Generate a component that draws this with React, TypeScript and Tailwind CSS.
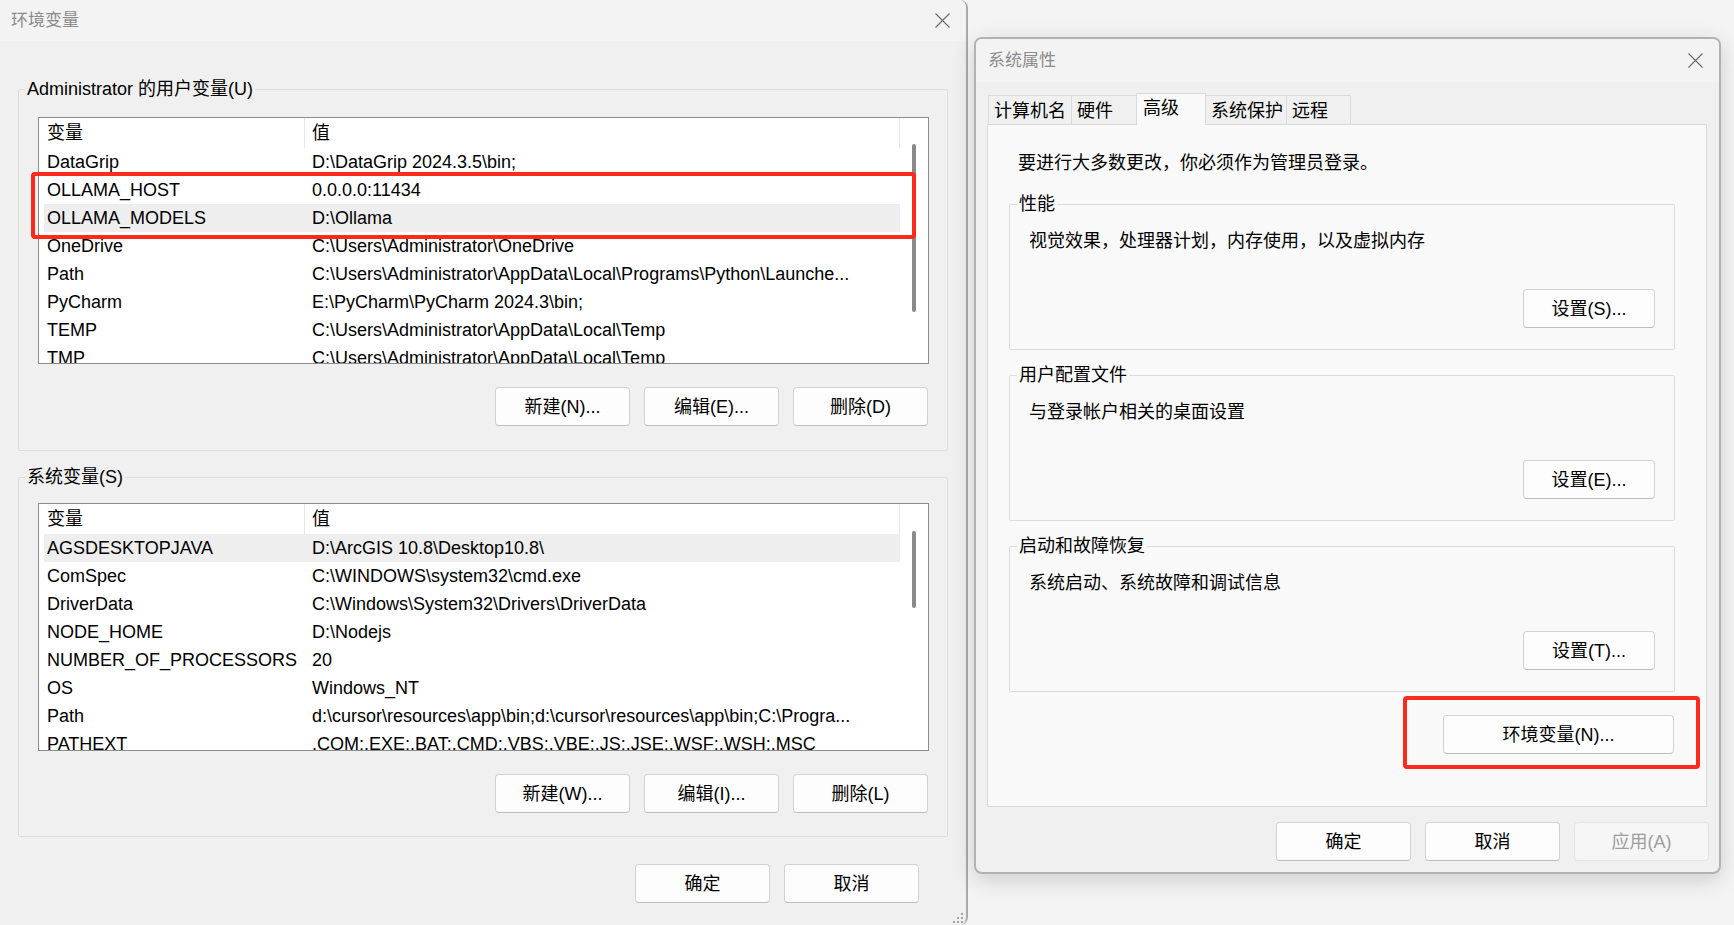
import React from "react";

type Row = [string, string];

const userVars: Row[] = [
  ["DataGrip", "D:\\DataGrip 2024.3.5\\bin;"],
  ["OLLAMA_HOST", "0.0.0.0:11434"],
  ["OLLAMA_MODELS", "D:\\Ollama"],
  ["OneDrive", "C:\\Users\\Administrator\\OneDrive"],
  ["Path", "C:\\Users\\Administrator\\AppData\\Local\\Programs\\Python\\Launche..."],
  ["PyCharm", "E:\\PyCharm\\PyCharm 2024.3\\bin;"],
  ["TEMP", "C:\\Users\\Administrator\\AppData\\Local\\Temp"],
  ["TMP", "C:\\Users\\Administrator\\AppData\\Local\\Temp"],
];

const sysVars: Row[] = [
  ["AGSDESKTOPJAVA", "D:\\ArcGIS 10.8\\Desktop10.8\\"],
  ["ComSpec", "C:\\WINDOWS\\system32\\cmd.exe"],
  ["DriverData", "C:\\Windows\\System32\\Drivers\\DriverData"],
  ["NODE_HOME", "D:\\Nodejs"],
  ["NUMBER_OF_PROCESSORS", "20"],
  ["OS", "Windows_NT"],
  ["Path", "d:\\cursor\\resources\\app\\bin;d:\\cursor\\resources\\app\\bin;C:\\Progra..."],
  ["PATHEXT", ".COM;.EXE;.BAT;.CMD;.VBS;.VBE;.JS;.JSE;.WSF;.WSH;.MSC"],
];

function CloseIcon() {
  return (
    <svg width="15" height="15" viewBox="0 0 15 15" fill="none">
      <path d="M0.5 0.5L14.5 14.5M14.5 0.5L0.5 14.5" stroke="#6a6a6a" strokeWidth="1.1" />
    </svg>
  );
}

function Btn({ children, className = "", disabled = false }: { children: React.ReactNode; className?: string; disabled?: boolean }) {
  const look = disabled
    ? "border-[#e3e3e3] bg-[#f6f6f6] text-[#9d9d9d]"
    : "border-[#d2d2d2] border-b-[#bcbcbc] bg-[#fdfdfd] text-black";
  return (
    <button className={`h-[39px] shrink-0 rounded-[4px] border text-[18px] leading-[24px] flex items-center justify-center ${look} ${className}`}>
      {children}
    </button>
  );
}

function GroupBox({
  label,
  legendClass,
  className = "",
  bodyClass,
  children,
}: {
  label: string;
  legendClass: string;
  className?: string;
  bodyClass: string;
  children: React.ReactNode;
}) {
  return (
    <fieldset className={`border border-[#dcdcdc] rounded-[2px] ${className}`}>
      <legend className={`px-[2px] text-[18px] leading-[24px] text-black ${legendClass}`}>{label}</legend>
      <div className={bodyClass}>{children}</div>
    </fieldset>
  );
}

function ListBox({
  rows,
  selected,
  height,
  thumbTop,
  thumbHeight,
}: {
  rows: Row[];
  selected: number;
  height: string;
  thumbTop: string;
  thumbHeight: string;
}) {
  return (
    <div className={`flex border border-[#8c8c8c] bg-white overflow-hidden ${height}`}>
      <div className="w-[861px] shrink-0">
        {/* column header */}
        <div className="flex h-[30px] border-r border-[#e8e8e8] text-[18px] leading-[30px]">
          <div className="w-[266px] shrink-0 pl-[8px] border-r border-[#e5e5e5]">变量</div>
          <div className="pl-[7px]">值</div>
        </div>
        <div className="pl-[5px]">
          {rows.map(([name, value], i) => (
            <div
              key={name + i}
              className={`flex h-[28px] text-[18px] leading-[28px] whitespace-nowrap ${i === selected ? "bg-[#eeeeee]" : ""}`}
            >
              <div className="w-[261px] shrink-0 pl-[3px] overflow-hidden">{name}</div>
              <div className="flex-1 min-w-0 pl-[7px] pr-[6px] overflow-hidden text-ellipsis">{value}</div>
            </div>
          ))}
        </div>
      </div>
      {/* scrollbar */}
      <div className={`flex-1 flex justify-center ${thumbTop}`}>
        <div className={`w-[4px] rounded-full bg-[#8a8a8a] ${thumbHeight}`} />
      </div>
    </div>
  );
}

function EnvDialog() {
  return (
    <div className="relative flex flex-col w-[968px] h-[925px] shrink-0 bg-[#f0f0f0] border-r-2 border-[#a9a9a9] rounded-r-[8px]">
      <div className="h-[41px] shrink-0 bg-[#f3f3f3] rounded-tr-[8px] flex items-center justify-between pl-[11px] pr-[16px]">
        <span className="text-[17px] leading-[24px] text-[#8b8b8b]">环境变量</span>
        <CloseIcon />
      </div>

      <div className="px-[18px] pt-[36px]">
        <GroupBox
          label="Administrator 的用户变量(U)"
          legendClass="ml-[6px]"
          bodyClass="pl-[19px] pr-[18px] pt-[16px] pb-[24px]"
        >
          <div className="relative">
            <ListBox rows={userVars} selected={2} height="h-[247px]" thumbTop="pt-[26px]" thumbHeight="h-[168px]" />
            {/* annotation */}
            <div className="absolute left-[-7px] top-[55px] w-[885px] h-[67px] border-[4px] border-[#fa2a1c] rounded-[4px]" />
          </div>
          <div className="mt-[23px] flex justify-end gap-[14px] pr-[1px]">
            <Btn className="w-[135px]">新建(N)...</Btn>
            <Btn className="w-[135px]">编辑(E)...</Btn>
            <Btn className="w-[135px]">删除(D)</Btn>
          </div>
        </GroupBox>

        <GroupBox
          label="系统变量(S)"
          legendClass="ml-[6px]"
          className="mt-[14px]"
          bodyClass="pl-[19px] pr-[18px] pt-[14px] pb-[23px]"
        >
          <ListBox rows={sysVars} selected={0} height="h-[248px]" thumbTop="pt-[27px]" thumbHeight="h-[77px]" />
          <div className="mt-[23px] flex justify-end gap-[14px] pr-[1px]">
            <Btn className="w-[135px]">新建(W)...</Btn>
            <Btn className="w-[135px]">编辑(I)...</Btn>
            <Btn className="w-[135px]">删除(L)</Btn>
          </div>
        </GroupBox>

        <div className="mt-[27px] flex justify-end gap-[14px] pr-[29px]">
          <Btn className="w-[135px]">确定</Btn>
          <Btn className="w-[135px]">取消</Btn>
        </div>
      </div>

      {/* resize grip */}
      <svg className="absolute right-[2px] bottom-[1px]" width="12" height="12" viewBox="0 0 12 12">
        <rect x="9" y="1" width="2" height="2" fill="#a4a4a4" />
        <rect x="5" y="5" width="2" height="2" fill="#a4a4a4" />
        <rect x="9" y="5" width="2" height="2" fill="#a4a4a4" />
        <rect x="1" y="9" width="2" height="2" fill="#a4a4a4" />
        <rect x="5" y="9" width="2" height="2" fill="#a4a4a4" />
        <rect x="9" y="9" width="2" height="2" fill="#a4a4a4" />
      </svg>
    </div>
  );
}

const tabs = [
  { label: "计算机名", w: "w-[84px]" },
  { label: "硬件", w: "w-[66px]" },
  { label: "高级", w: "w-[70px]", active: true },
  { label: "系统保护", w: "w-[82px]" },
  { label: "远程", w: "w-[65px]" },
];

function SystemProps() {
  return (
    <div className="relative shrink-0 ml-[6px] mt-[37px] w-[747px] h-[837px] flex flex-col rounded-[8px] border-2 border-[#b2b2b2] bg-[#f0f0f0] shadow-[0_6px_22px_rgba(0,0,0,0.16)] overflow-hidden">
      <div className="h-[43px] shrink-0 bg-[#f3f3f3] flex items-center justify-between pl-[12px] pr-[16px]">
        <span className="text-[17px] leading-[24px] text-[#8b8b8b]">系统属性</span>
        <CloseIcon />
      </div>

      <div className="pl-[11px] pr-[12px] pt-[11px]">
        <div className="flex items-end h-[31px] pl-[1px]">
          {tabs.map((t, i) => (
            <div
              key={t.label}
              className={`${t.w} shrink-0 border border-b-0 border-[#d9d9d9] text-[18px] leading-[24px] whitespace-nowrap ${
                i > 0 ? "-ml-px" : ""
              } ${t.active ? "relative z-10 h-[32px] -mb-px bg-[#f9f9f9] pl-[6px] pt-[2px]" : "h-[29px] bg-[#f0f0f0] pl-[5px] pt-[3px]"}`}
            >
              {t.label}
            </div>
          ))}
        </div>

        <div className="h-[683px] border border-[#d9d9d9] bg-[#f9f9f9] pl-[21px] pr-[31px] pt-[26px]">
          <div className="ml-[9px] text-[18px] leading-[24px]">要进行大多数更改，你必须作为管理员登录。</div>

          <GroupBox label="性能" legendClass="ml-[7px]" className="mt-[17px]" bodyClass="pl-[19px] pr-[19px] pt-[13px] pb-[21px]">
            <div className="text-[18px] leading-[24px]">视觉效果，处理器计划，内存使用，以及虚拟内存</div>
            <div className="mt-[36px] flex justify-end">
              <Btn className="w-[132px]">设置(S)...</Btn>
            </div>
          </GroupBox>

          <GroupBox label="用户配置文件" legendClass="ml-[7px]" className="mt-[13px]" bodyClass="pl-[19px] pr-[19px] pt-[13px] pb-[21px]">
            <div className="text-[18px] leading-[24px]">与登录帐户相关的桌面设置</div>
            <div className="mt-[36px] flex justify-end">
              <Btn className="w-[132px]">设置(E)...</Btn>
            </div>
          </GroupBox>

          <GroupBox label="启动和故障恢复" legendClass="ml-[7px]" className="mt-[13px]" bodyClass="pl-[19px] pr-[19px] pt-[13px] pb-[21px]">
            <div className="text-[18px] leading-[24px]">系统启动、系统故障和调试信息</div>
            <div className="mt-[36px] flex justify-end">
              <Btn className="w-[132px]">设置(T)...</Btn>
            </div>
          </GroupBox>

          <div className="mt-[23px] flex justify-end pr-[1px]">
            <div className="relative">
              <Btn className="w-[231px]">环境变量(N)...</Btn>
              {/* annotation */}
              <div className="absolute left-[-40px] top-[-19px] w-[297px] h-[73px] border-[4px] border-[#fa2a1c] rounded-[4px]" />
            </div>
          </div>
        </div>

        <div className="mt-[15px] flex justify-end gap-[14px] mr-[-2px]">
          <Btn className="w-[135px]">确定</Btn>
          <Btn className="w-[135px]">取消</Btn>
          <Btn className="w-[135px]" disabled>
            应用(A)
          </Btn>
        </div>
      </div>
    </div>
  );
}

export default function App() {
  return (
    <div className="flex items-start w-[1734px] h-[925px] overflow-hidden bg-[#f4f4f4] text-black font-['Liberation_Sans','Noto_Sans_CJK_SC',sans-serif]">
      <EnvDialog />
      <SystemProps />
    </div>
  );
}
